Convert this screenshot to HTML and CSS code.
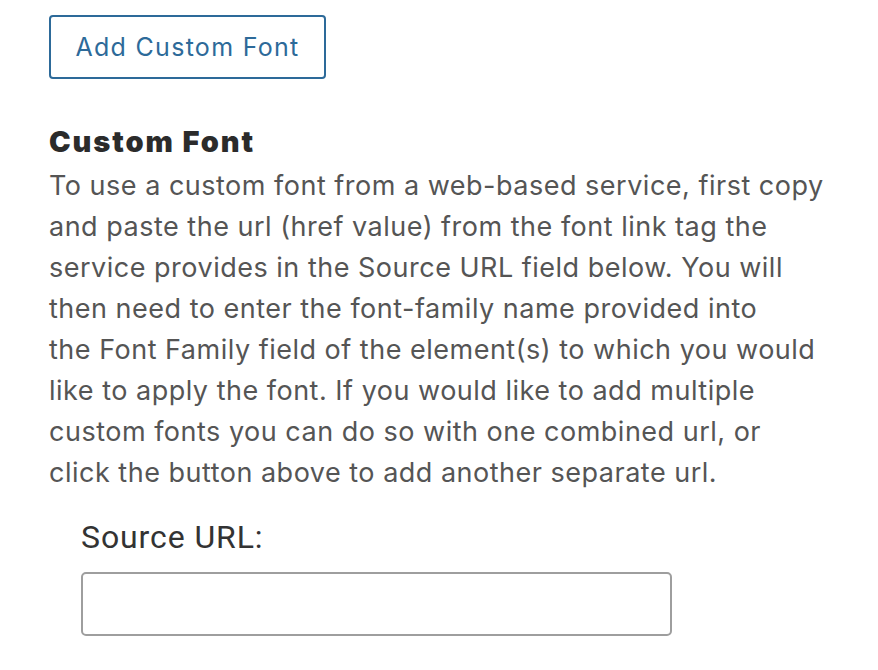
FILE: index.html
```html
<!DOCTYPE html>
<html>
<head>
<meta charset="utf-8">
<link rel="stylesheet" href="styles.css">
</head>
<body>
<div class="page">
  <button class="add-btn" type="button">Add Custom Font</button>
  <section class="custom-font">
    <h3 class="title">Custom Font</h3>
    <p class="desc">
      <span class="ln">To use a custom font from a web-based service, first copy</span>
      <span class="ln">and paste the url (href value) from the font link tag the</span>
      <span class="ln">service provides in the Source URL field below. You will</span>
      <span class="ln">then need to enter the font-family name provided into</span>
      <span class="ln">the Font Family field of the element(s) to which you would</span>
      <span class="ln">like to apply the font. If you would like to add multiple</span>
      <span class="ln">custom fonts you can do so with one combined url, or</span>
      <span class="ln">click the button above to add another separate url.</span>
    </p>
    <div class="field">
      <label class="label" for="src">Source URL:</label>
      <input class="input" id="src" type="text">
    </div>
  </section>
</div>
</body>
</html>
```
FILE: styles.css
```css
html, body {
  margin: 0;
  padding: 0;
  background: #fff;
}
.page {
  padding: 15px 0 0 49px;
  font-family: "Inter", "Noto Sans", sans-serif;
}
.add-btn {
  display: block;
  width: 277px;
  height: 64px;
  border: 2px solid #2d6a99;
  border-radius: 4px;
  background: #fff;
  color: #2d6a99;
  font-family: "Inter", sans-serif;
  font-size: 25px;
  letter-spacing: 1.3px;
  padding: 0;
}
.custom-font {
  margin-top: 43px;
}
.title {
  margin: 0;
  font-size: 29px;
  font-weight: 900;
  letter-spacing: 1.9px;
  color: #2b2b2b;
  line-height: 40px;
}
.desc {
  margin: 3px 0 0;
  font-size: 27px;
  letter-spacing: 0.5px;
  line-height: 41px;
  color: #555;
  white-space: nowrap;
}
.ln {
  display: block;
}
.field {
  display: flex;
  flex-direction: column;
  margin-left: 32px;
  margin-top: 24px;
}
.label {
  font-family: "Roboto", sans-serif;
  font-size: 32px;
  letter-spacing: 0.9px;
  color: #333;
  line-height: 40px;
}
.input {
  margin-top: 15px;
  width: 591px;
  height: 64px;
  box-sizing: border-box;
  border: 2px solid #9e9e9e;
  border-radius: 5px;
}
```
